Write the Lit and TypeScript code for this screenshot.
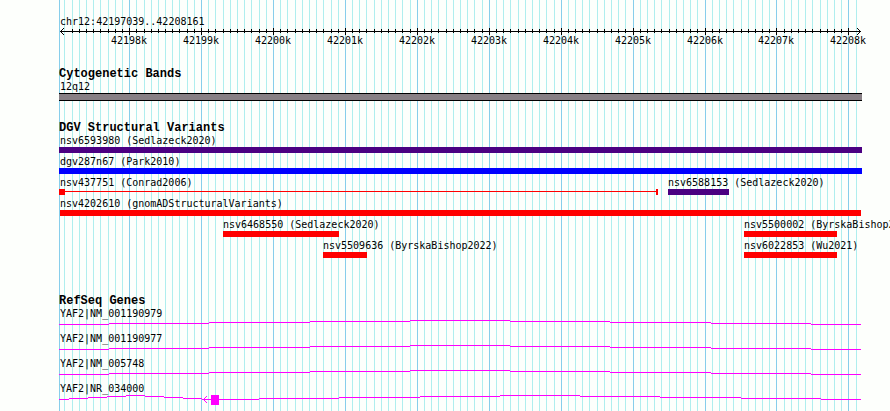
import { LitElement, css, html, svg } from 'lit';
import { customElement, property, state } from 'lit/decorators.js';

const START = 42197039;
const END = 42208161;
const PAD = 60;
const PAD_RIGHT = 30;

interface Feature {
	name: string;
	color: string;
	// blocks are joined by a thin line when there is more than one
	blocks: [number, number][];
}

interface Gene {
	name: string;
	exons: [number, number][];
}

const violet = '#4b0082';
const blue = '#0000ff';
const red = '#ff0000';

const variantLanes: Feature[][] = [
	[{ name: 'nsv6593980 (Sedlazeck2020)', color: violet, blocks: [[42190000, 42215000]] }],
	[{ name: 'dgv287n67 (Park2010)', color: blue, blocks: [[42190000, 42215000]] }],
	[
		{ name: 'nsv437751 (Conrad2006)', color: red, blocks: [[42190000, 42197109], [42205325, 42205353]] },
		{ name: 'nsv6588153 (Sedlazeck2020)', color: violet, blocks: [[42205492, 42206340]] },
	],
	[{ name: 'nsv4202610 (gnomADStructuralVariants)', color: red, blocks: [[42197039, 42208175]] }],
	[
		{ name: 'nsv6468550 (Sedlazeck2020)', color: red, blocks: [[42199305, 42200918]] },
		{ name: 'nsv5500002 (ByrskaBishop2022)', color: red, blocks: [[42206548, 42207841]] },
	],
	[
		{ name: 'nsv5509636 (ByrskaBishop2022)', color: red, blocks: [[42200695, 42201307]] },
		{ name: 'nsv6022853 (Wu2021)', color: red, blocks: [[42206548, 42207841]] },
	],
];

const genes: Gene[] = [
	{ name: 'YAF2|NM_001190979', exons: [] },
	{ name: 'YAF2|NM_001190977', exons: [] },
	{ name: 'YAF2|NM_005748', exons: [] },
	{ name: 'YAF2|NR_034000', exons: [[42199138, 42199250]] },
];

// pixel column of a base, clipped just outside of the plot
function toX(bp: number, width: number) {
	const plot = width - PAD - PAD_RIGHT;
	const x = Math.round(PAD + ((bp - START) * plot) / (END - START));
	return Math.max(PAD - 1, Math.min(PAD + plot + 2, x));
}

function ticks() {
	const list: number[] = [];
	for (let bp = Math.ceil(START / 100) * 100; bp <= END; bp += 100) list.push(bp);
	return list;
}

// intron "hat": rises 4px to the middle and falls back, in whole pixel steps
function hat(x0: number, x1: number, base: number) {
	const step = (x1 - x0) / 8;
	let d = '';
	for (let i = 0; i <= 8; i++) {
		const from = i === 0 ? x0 : Math.round(x0 + (i - 0.5) * step);
		const to = i === 8 ? x1 : Math.round(x0 + (i + 0.5) * step);
		const y = base - (4 - Math.abs(4 - i)) + 0.5;
		d += `M${from} ${y}H${to}`;
	}
	return d;
}

const chart = css`
  :host {
    display: block;
  }

  svg {
    display: block;
    width: 100%;
    overflow: visible;
    shape-rendering: crispEdges;
  }

  text {
    font: 10px 'DejaVu Sans Mono', 'Liberation Mono', monospace;
    fill: #000;
  }
`;

@customElement('gb-grid')
class Grid extends LitElement {
	static styles = [chart, css`
    svg {
      height: 100%;
    }

    .minor {
      fill: #afeeee;
    }

    .major {
      fill: #87ceeb;
    }
  `];

	@property({ type: Number }) width = 0;

	render() {
		return html`
      <svg aria-hidden="true">
        <rect class="major" x=${PAD - 1} y="0" width="1" height="100%"></rect>
        ${ticks().map(bp => svg`
          <rect class=${bp % 1000 ? 'minor' : 'major'} x=${toX(bp, this.width)} y="0" width="1" height="100%"></rect>
        `)}
      </svg>
    `;
	}
}

@customElement('gb-ruler')
class Ruler extends LitElement {
	static styles = [chart, css`
    svg {
      height: 48px;
    }

    .tick {
      text-anchor: middle;
    }

    path {
      fill: none;
      stroke: #000;
    }
  `];

	@property({ type: Number }) width = 0;

	render() {
		const right = this.width - PAD_RIGHT + 1;
		return html`
      <svg>
        <text x=${PAD} y="25">chr12:${START}..${END}</text>
        <rect x=${PAD} y="31" width=${Math.max(0, right - PAD)} height="1"></rect>
        <path d="M${PAD + 4} 28L${PAD + 0.5} 31.5L${PAD + 4} 35"></path>
        <path d="M${right - 4} 28L${right - 0.5} 31.5L${right - 4} 35"></path>
        ${ticks().map(bp => {
			const x = toX(bp, this.width);
			if (bp % 1000 === 0) {
				return svg`
              <rect x=${x} y="28" width="1" height="7"></rect>
              <text class="tick" x=${x} y="44">${bp / 1000}k</text>
            `;
			}
			// the arrow heads take the place of the outermost ticks
			if (x < PAD + 6 || x > right - 6) return null;
			return svg`<rect x=${x} y="29" width="1" height="4"></rect>`;
		})}
      </svg>
    `;
	}
}

@customElement('gb-band')
class Band extends LitElement {
	static styles = [chart, css`
    svg {
      height: 21px;
    }

    .fill {
      fill: #888085;
    }
  `];

	@property({ type: Number }) width = 0;
	@property() name = '';

	render() {
		const w = Math.max(0, this.width - PAD - PAD_RIGHT + 3);
		return html`
      <svg>
        <text x=${PAD} y="9">${this.name}</text>
        <rect x=${PAD - 1} y="12" width=${w} height="8"></rect>
        <rect class="fill" x=${PAD - 1} y="13" width=${w} height="6"></rect>
      </svg>
    `;
	}
}

@customElement('gb-variants')
class Variants extends LitElement {
	static styles = [chart, css`
    svg {
      height: 21px;
    }
  `];

	@property({ type: Number }) width = 0;
	@property({ attribute: false }) features: Feature[] = [];

	feature(f: Feature) {
		const blocks = f.blocks.map(([a, b]) => [toX(a, this.width), toX(b, this.width)]);
		const first = blocks[0][0];
		const last = blocks[blocks.length - 1][1];
		return svg`
      <text x=${Math.max(PAD, first)} y="9">${f.name}</text>
      <rect fill=${f.color} x=${first} y="14" width=${last - first} height="1"></rect>
      ${blocks.map(([a, b]) => svg`<rect fill=${f.color} x=${a} y="12" width=${b - a} height="6"></rect>`)}
    `;
	}

	render() {
		return html`<svg>${this.features.map(f => this.feature(f))}</svg>`;
	}
}

@customElement('gb-gene')
class GeneTrack extends LitElement {
	static styles = [chart, css`
    svg {
      height: 25px;
    }

    path {
      fill: none;
      stroke: #ff00ff;
    }

    rect {
      fill: #ff00ff;
    }
  `];

	@property({ type: Number }) width = 0;
	@property({ attribute: false }) gene: Gene = genes[0];

	render() {
		const exons = this.gene.exons.map(([a, b]) => [toX(a, this.width), toX(b, this.width)]);
		const edges = [PAD - 1, ...exons.flat(), this.width - PAD_RIGHT + 1];
		const introns: string[] = [];
		for (let i = 0; i < edges.length; i += 2) introns.push(hat(edges[i], edges[i + 1], 16));
		return html`
      <svg>
        <text x=${PAD} y="9">${this.gene.name}</text>
        ${introns.map(d => svg`<path d=${d}></path>`)}
        ${exons.map(([a, b]) => svg`
          <rect x=${a} y="12" width=${b - a} height="10"></rect>
          <path d="M${a - 4} 13L${a - 7.5} 16.5L${a - 4} 20"></path>
        `)}
      </svg>
    `;
	}
}

@customElement('app-root')
class App extends LitElement {
	static styles = css`
    :host {
      display: block;
      position: relative;
      min-height: 100vh;
      box-sizing: border-box;
      overflow: hidden;
      background: #fdfffc;
      color: #000;
    }

    .grid {
      position: absolute;
      inset: 0;
    }

    .tracks {
      position: relative;
      display: flex;
      flex-direction: column;
      gap: 20px;
      padding-bottom: 3px;
    }

    .roomy {
      padding-bottom: 14px;
    }

    h2 {
      margin: 0;
      padding-left: 59px;
      font: bold 12px/13px 'Liberation Mono', 'DejaVu Sans Mono', monospace;
    }
  `;

	@state() width = 0;

	observer = new ResizeObserver(() => this.measure());

	connectedCallback() {
		super.connectedCallback();
		this.measure();
		this.observer.observe(this);
	}

	disconnectedCallback() {
		this.observer.disconnect();
		super.disconnectedCallback();
	}

	measure() {
		this.width = this.clientWidth || window.innerWidth;
	}

	render() {
		return html`
      <gb-grid class="grid" .width=${this.width}></gb-grid>
      <main class="tracks">
        <gb-ruler .width=${this.width}></gb-ruler>

        <section>
          <h2>Cytogenetic Bands</h2>
          <gb-band name="12q12" .width=${this.width}></gb-band>
        </section>

        <section class="roomy">
          <h2>DGV Structural Variants</h2>
          ${variantLanes.map(lane => html`<gb-variants .features=${lane} .width=${this.width}></gb-variants>`)}
        </section>

        <section>
          <h2>RefSeq Genes</h2>
          ${genes.map(gene => html`<gb-gene .gene=${gene} .width=${this.width}></gb-gene>`)}
        </section>
      </main>
    `;
	}
}
